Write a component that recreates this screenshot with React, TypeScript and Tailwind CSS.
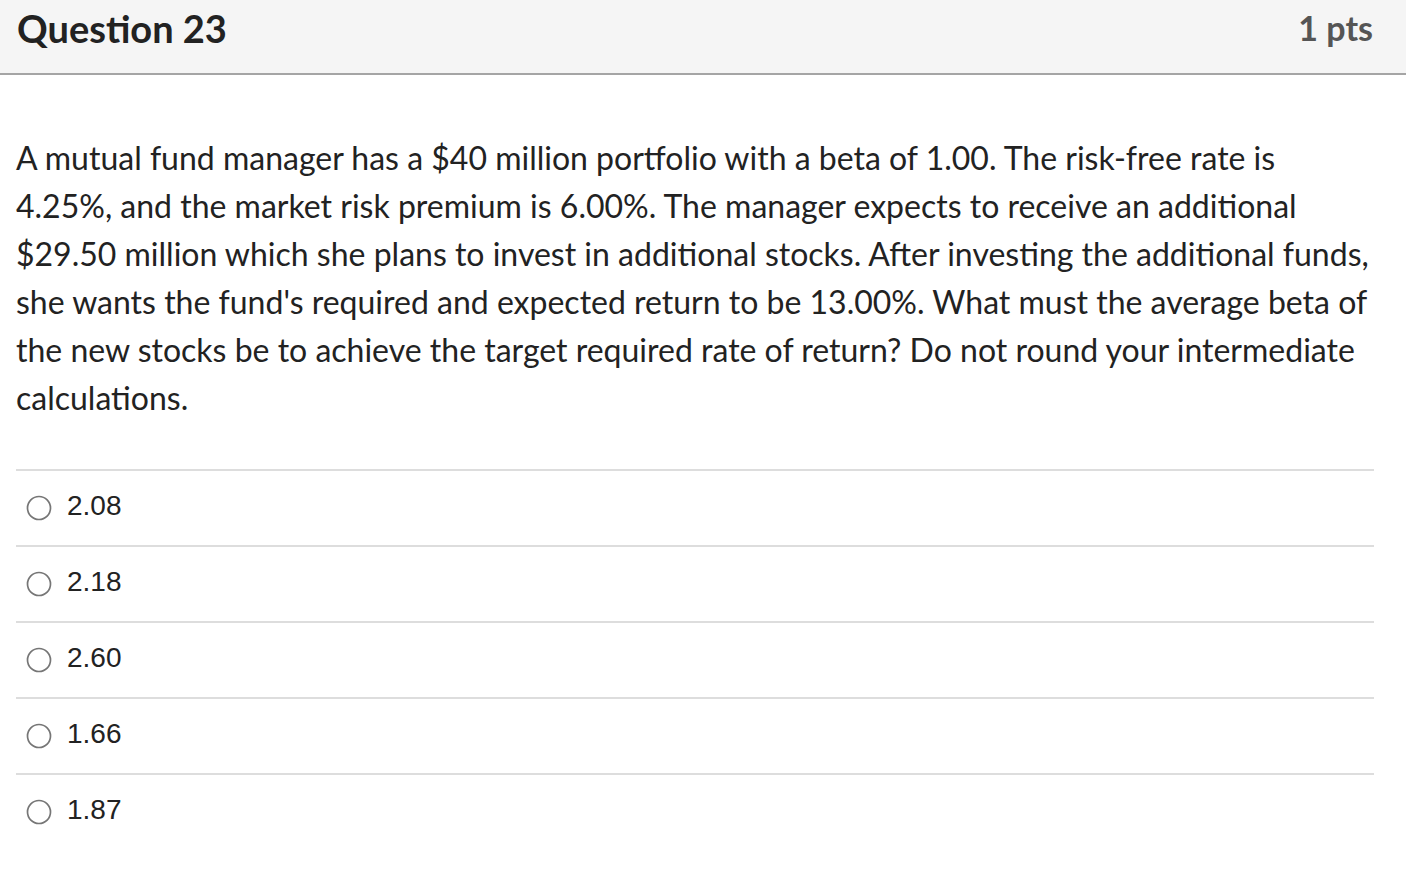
const options = ["2.08", "2.18", "2.60", "1.66", "1.87"];

function Radio() {
  return (
    <svg width="26" height="26" viewBox="0 0 26 26" className="shrink-0">
      <circle cx="13" cy="13" r="11.5" fill="#fff" stroke="#767676" strokeWidth="1.7" />
    </svg>
  );
}

export default function App() {
  return (
    <div className="min-h-screen bg-white text-[#222] font-['Lato','Noto_Sans',sans-serif]">
      <header className="h-[75px] bg-[#f5f5f5] border-b-2 border-[#a5a5a5] flex items-start justify-between pl-[17px] pr-[33px] pt-[5px]">
        <h2 className="text-[38px] font-bold leading-[46px] text-[#222]">Question 23</h2>
        <span className="text-[34px] font-bold leading-[46px] text-[#555]">1 pts</span>
      </header>

      <div className="pl-4 pr-8">
        <p className="mt-[59px] text-[32px] leading-[48px] text-[#222]">
          A mutual fund manager has a $40 million portfolio with a beta of 1.00. The risk-free rate is
          4.25%, and the market risk premium is 6.00%. The manager expects to receive an additional
          $29.50 million which she plans to invest in additional stocks. After investing the additional
          funds, she wants the fund's required and expected return to be 13.00%. What must the average
          beta of the new stocks be to achieve the target required rate of return? Do not round your
          intermediate calculations.
        </p>

        <div className="mt-[47px]">
          {options.map((o) => (
            <label
              key={o}
              className="flex items-center gap-[15px] h-[76px] border-t-2 border-[#dddddd] pl-[10px]"
            >
              <Radio />
              <span className="pb-[4px] text-[28px] text-[#222] font-['Liberation_Sans',Arial,sans-serif]">{o}</span>
            </label>
          ))}
        </div>
      </div>
    </div>
  );
}
